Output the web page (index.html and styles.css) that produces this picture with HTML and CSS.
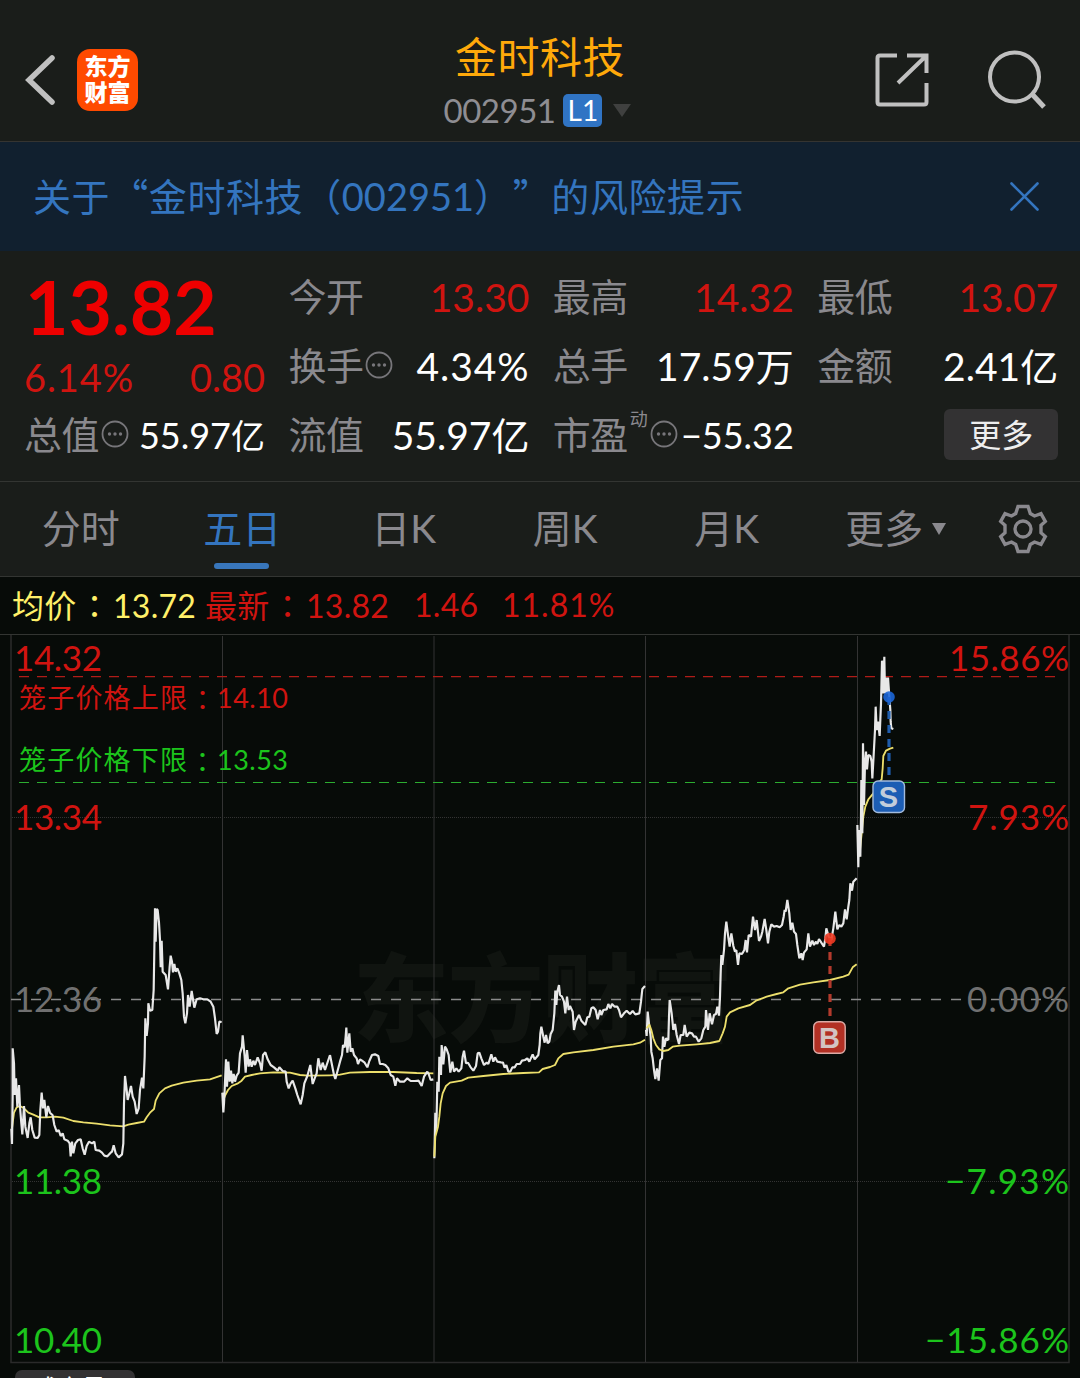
FILE: index.html
```html
<!DOCTYPE html>
<html lang="zh-CN">
<head>
  <meta charset="UTF-8">
  <meta name="viewport" content="width=device-width, initial-scale=1.0">
  <title>金时科技 002951</title>
  <link rel="stylesheet" href="styles.css">
</head>
<body>

  <header class="header">
    <div class="header-left">
      <svg class="back" width="32" height="56" viewBox="0 0 32 56"><path d="M28 6L5 28L28 50"/></svg>
      <div class="logo"><span>东方</span><span>财富</span></div>
    </div>
    <div class="header-title">
      <h1>金时科技</h1>
      <div class="code">
        <span class="code-num">002951</span>
        <span class="level">L1</span>
        <svg width="20" height="13" viewBox="0 0 20 13"><path d="M1 0H19L10 13Z" fill="#3f403f"/></svg>
      </div>
    </div>
    <div class="header-right">
      <svg class="line-icon" width="54" height="54" viewBox="0 0 54 54">
        <path d="M22 2.5H5Q2.5 2.5 2.5 5V49Q2.5 51.5 5 51.5H49Q51.5 51.5 51.5 49V30"/>
        <path d="M32 2.5H51.5V20M51 3L23 30"/>
      </svg>
      <svg class="line-icon" width="60" height="60" viewBox="0 0 60 60">
        <circle cx="27.5" cy="27" r="24.5"/>
        <path d="M44.5 43.5L57 57" stroke-width="5"/>
      </svg>
    </div>
  </header>

  <div class="notice">
    <p>关于“金时科技（<span class="notice-num">002951</span>）<span class="quote-end">”</span>的风险提示</p>
    <svg width="29" height="29" viewBox="0 0 29 29"><path d="M1.5 1.5L27.5 27.5M27.5 1.5L1.5 27.5"/></svg>
  </div>

  <section class="quote">
    <div class="price-box">
      <div class="price">13.82</div>
      <div class="change"><span class="rate">6.14%</span><span>0.80</span></div>
    </div>
    <div class="cell"><label>今开</label><b class="up">13.30</b></div>
    <div class="cell"><label>最高</label><b class="up">14.32</b></div>
    <div class="cell"><label>最低</label><b class="up">13.07</b></div>
    <div class="cell"><label>换手</label><svg class="more-dot" width="28" height="28" viewBox="0 0 28 28"><circle class="ring" cx="14" cy="14" r="12.5"/><circle cx="8.5" cy="14" r="1.7"/><circle cx="14" cy="14" r="1.7"/><circle cx="19.5" cy="14" r="1.7"/></svg><b class="rate">4.34%</b></div>
    <div class="cell"><label>总手</label><b>17.59<i>万</i></b></div>
    <div class="cell"><label>金额</label><b>2.41<i>亿</i></b></div>
    <div class="cell small"><label>总值</label><svg class="more-dot" width="28" height="28" viewBox="0 0 28 28"><circle class="ring" cx="14" cy="14" r="12.5"/><circle cx="8.5" cy="14" r="1.7"/><circle cx="14" cy="14" r="1.7"/><circle cx="19.5" cy="14" r="1.7"/></svg><b>55.97<i>亿</i></b></div>
    <div class="cell"><label>流值</label><b>55.97<i>亿</i></b></div>
    <div class="cell small"><label>市盈</label><sup>动</sup><svg class="more-dot" width="28" height="28" viewBox="0 0 28 28"><circle class="ring" cx="14" cy="14" r="12.5"/><circle cx="8.5" cy="14" r="1.7"/><circle cx="14" cy="14" r="1.7"/><circle cx="19.5" cy="14" r="1.7"/></svg><b>−55.32</b></div>
    <div class="cell end"><button class="more-btn">更多</button></div>
  </section>

  <nav class="tabs">
    <a>分时</a>
    <a class="active">五日</a>
    <a>日K</a>
    <a>周K</a>
    <a>月K</a>
    <a class="tab-more">更多<svg width="14" height="12" viewBox="0 0 14 12"><path d="M0 0H14L7 12Z"/></svg></a>
    <svg class="gear" width="50" height="50" viewBox="998 504 50 50">
      <path d="M1018 506.5H1028L1030.3 513.5L1034.5 516L1041 513.7L1045.3 521.5L1041 525.3V532.7L1045.3 536.5L1041 544.3L1034.5 542L1030.3 544.5L1028 551.5H1018L1015.7 544.5L1011.5 542L1005 544.3L1000.7 536.5L1005 532.7V525.3L1000.7 521.5L1005 513.7L1011.5 516L1015.7 513.5Z"/>
      <circle cx="1023" cy="529" r="8"/>
    </svg>
  </nav>

  <div class="info">
    <span class="avg">均价<em lang="zh-TW">：</em>13.72</span>
    <span class="last">最新<em lang="zh-TW">：</em>13.82</span>
    <span class="last diff">1.46</span>
    <span class="last pct">11.81%</span>
  </div>

  <svg class="chart" width="1080" height="734" viewBox="0 635 1080 734">
    <text class="watermark" x="353" y="1034" textLength="380">东方财富</text>

    <!-- grid -->
    <path class="frame" d="M11 635V1362.5H1069V635"/>
    <path class="grid" d="M222.5 636V1362M434 636V1362M645.5 636V1362M857.5 636V1362"/>
    <path class="dots" d="M12 817.5H1069M12 1181.5H1069"/>
    <path class="zero" d="M11 999.5H1069"/>
    <path class="limit-up" d="M19 676.7H1055"/>
    <path class="limit-down" d="M19 782.5H1055"/>

    <!-- day 1, start of day 2 -->
    <g transform="translate(0 890) scale(.33333)">
      <polyline class="avg-line" points="36,715 42,668 50,652 60,648 72,655 85,668 100,674 118,682 140,682 165,680 190,683 220,693 250,697 290,701 330,706 370,709 385,704 410,699 432,695 440,682 450,668 462,657 467,632 478,610 495,595 515,587 550,578 590,572 630,568 665,556"/>
      <polyline class="price-line" points="34,716 36,762 38,620 38,475 42,520 44,615 48,565 52,650 57,585 60,650 64,700 67,733 72,648 76,710 83,744 88,700 92,682 97,720 104,743 113,744 118,735 121,660 125,608 129,655 133,630 139,682 144,648 150,668 158,676 163,705 170,725 176,720 182,738 188,730 193,748 203,752 209,760 212,799 216,755 220,790 226,760 234,750 242,748 248,775 254,794 260,768 267,755 276,760 283,755 287,780 298,782 306,788 313,797 322,799 332,788 336,785 341,766 347,790 356,802 366,793 370,760 372,640 375,558 380,600 383,630 388,610 393,588 398,620 404,635 410,672 416,655 420,600 426,563 430,595 434,500 436,385 440,438 444,400 445,340 450,362 457,360 461,300 463,180 465,55 467,155 470,57 473,60 477,98 480,150 482,232 485,152 488,245 497,255 504,298 509,230 512,197 516,215 519,247 523,222 527,245 532,235 538,250 544,270 548,310 552,380 556,400 561,370 564,315 569,350 575,303 583,353 590,328 600,325 610,328 622,328 632,335 640,350 645,385 650,432 654,425 658,395 665,396"/>
      <polyline class="avg-line" points="670,630 676,615 684,600 695,588 712,581 725,572 735,560 755,555 780,550 820,547 870,548 900,555 925,557 990,556"/>
      <polyline class="price-line" points="667,608 670,667 672,640 674,600 678,508 681,590 685,515 689,575 693,542 697,580 701,552 705,575 710,557 716,548 720,490 726,470 728,436 734,500 737,548 741,480 746,530 750,508 755,530 760,512 765,525 773,502 780,520 785,542 789,495 796,487 803,508 812,525 822,532 833,542 838,532 848,543 857,545 860,575 866,595 872,580 878,572 886,595 892,615 902,643 908,615 913,580 922,558 931,525 938,582 944,565 950,550 955,505 962,540 968,518 975,540 981,522 990,495"/>
    </g>

    <!-- rest of day 2, day 3 -->
    <g transform="translate(320 930) scale(.33333)">
      <polyline class="avg-line" points="30,436 60,434 90,428 150,426 220,426 290,429 340,430"/>
      <polyline class="price-line" points="30,375 36,405 42,435 46,447 52,425 60,395 66,375 69,345 74,352 77,320 79,293 82,368 88,310 92,365 97,355 102,375 110,385 114,402 120,388 126,392 134,398 142,412 148,393 156,375 165,373 175,378 180,402 188,402 196,405 205,415 212,435 220,440 226,467 231,445 240,455 252,455 262,445 272,453 285,453 296,452 305,468 312,440 322,425 326,432 332,450 340,448"/>
      <polyline class="price-line" points="343,685 345,600 346,548 349,600 352,455 356,485 358,380 361,405 363,435 365,345 370,403 375,350 380,358 386,375 391,428 397,395 402,425 409,415 416,425 424,415 428,380 432,362 438,400 444,398 452,412 460,422 468,408 473,370 478,368 484,385 492,405 500,398 505,402 514,373 520,395 525,382 532,395 543,397 549,398 554,413 559,405 565,425 571,425 577,412 584,412 590,402 600,402 606,392 615,390 622,385 628,395 638,373 644,388 655,375 659,345 661,310 664,290 670,320 674,338 678,315 683,340 688,335 692,312 698,300 703,250 706,182 709,225 712,185 717,165 720,195 726,200 732,215 736,250 741,200 746,240 750,228 758,245 762,300 767,275 777,255 784,272 796,285 802,262 808,260 814,235 820,232 827,240 833,268 840,240 844,255 850,240 860,238 865,222 871,235 876,222 884,230 892,230 897,240 903,262 912,250 920,242 930,252 938,243 946,253 958,250 963,215 967,177 975,168"/>
      <polyline class="avg-line" points="343,680 346,620 354,590 358,560 362,520 368,490 378,468 390,458 425,452 445,443 490,438 550,432 610,429 657,427 668,417 690,411 705,405 715,385 730,372 760,367 820,360 880,350 940,343 960,338 975,329"/>
    </g>

    <!-- day 4 -->
    <g transform="translate(630 870) scale(.33333)">
      <polyline class="price-line" points="48,480 50,498 53,425 58,470 62,500 64,545 68,565 72,600 76,627 81,595 86,632 91,570 96,565 99,500 103,530 108,505 115,510 117,440 119,390 125,430 130,480 135,462 140,495 147,522 152,495 160,495 164,465 170,500 178,488 186,490 192,500 198,500 206,515 214,505 220,480 226,470 228,420 234,480 239,430 246,463 252,435 258,432 262,410 267,437 270,380 272,310 274,255 277,285 282,240 285,190 289,155 294,195 299,230 304,190 310,228 315,245 319,240 324,285 328,250 336,252 343,240 347,210 351,247 356,195 363,200 369,140 375,180 380,150 387,213 393,200 397,185 404,147 409,180 414,220 418,185 424,163 432,170 440,168 449,172 456,165 461,140 464,120 467,125 472,90 478,130 482,180 487,158 492,185 498,192 502,225 508,265 514,250 518,270 522,248 530,238 535,190 540,230 547,212 552,225 558,215 562,222 567,207 574,218 582,230 586,205 589,175 596,200 604,210 610,175 616,125 622,178 628,165 634,170 640,160 645,118 650,148 655,110 658,90 661,40 666,62 670,35 680,25"/>
      <polyline class="avg-line" points="50,475 58,464 64,480 70,505 78,525 88,538 100,543 115,540 128,530 150,527 200,523 240,519 268,513 278,490 285,470 290,440 300,427 325,415 360,405 378,392 410,380 440,372 460,367 475,355 510,344 550,337 600,330 640,320 656,314 668,292 680,283"/>
    </g>

    <!-- day 5 -->
    <g transform="translate(780 630) scale(.33333)">
      <polyline class="avg-line" points="238,680 244,620 250,560 256,530 265,508 280,490 290,465 305,448 308,415 310,378 318,362 330,356 340,353"/>
      <polyline class="price-line" points="232,585 235,712 237,600 241,680 243,560 244,450 247,610 249,340 252,525 255,400 258,365 261,418 265,375 271,378 275,395 277,445 281,375 285,300 287,230 290,300 294,275 299,318 303,220 306,92 310,190 313,80 315,190 318,143 321,190 324,143 328,200 331,240 332,275 334,295 340,297"/>
    </g>

    <!-- axis labels -->
    <g class="axis">
      <text class="red" x="14" y="671" textLength="88">14.32</text>
      <text class="red" x="14" y="830" textLength="88">13.34</text>
      <text class="gray" x="14" y="1012" textLength="88">12.36</text>
      <text class="green" x="14" y="1194" textLength="88">11.38</text>
      <text class="green" x="14" y="1353" textLength="88">10.40</text>
      <text class="red" x="949" y="671" textLength="120">15.86%</text>
      <text class="red" x="968" y="830" textLength="101">7.93%</text>
      <text class="gray" x="967" y="1012" textLength="102">0.00%</text>
      <text class="green" x="945" y="1194" textLength="124">−7.93%</text>
      <text class="green" x="925" y="1353" textLength="144">−15.86%</text>
    </g>
    <g class="cage">
      <text class="red" x="19" y="708" textLength="168">笼子价格上限</text>
      <text class="red colon" x="189" y="710">：</text>
      <text class="red" x="217" y="708" textLength="71">14.10</text>
      <text class="green" x="19" y="770" textLength="168">笼子价格下限</text>
      <text class="green colon" x="189" y="772">：</text>
      <text class="green" x="217" y="770" textLength="71">13.53</text>
    </g>

    <!-- trade marks -->
    <path class="mark-s" d="M889 697V776"/>
    <circle cx="889" cy="697" r="5.8" fill="#1c66d8" fill-opacity=".9"/>
    <rect x="873" y="781" width="31.5" height="31.5" rx="5" fill="#1c5db4" stroke="#a3bbdc" stroke-width="1.4"/>
    <text class="mark" x="888.5" y="807" fill="#c2cddb">S</text>
    <path class="mark-b" d="M830 938V1017"/>
    <circle cx="830" cy="938.5" r="5.8" fill="#f03a22" fill-opacity=".9"/>
    <rect x="813.7" y="1021.7" width="31.5" height="31.5" rx="5" fill="#b23024" stroke="#dcaaa5" stroke-width="1.4"/>
    <text class="mark" x="829.5" y="1048" fill="#d3c4c2">B</text>
  </svg>

  <div class="indicator"><span>成交量</span></div>

</body>
</html>
```
FILE: styles.css
```css
* {
  box-sizing: border-box;
}

body {
  margin: 0;
  width: 1080px;
  height: 1378px;
  overflow: hidden;
  background-color: #070b08;
  color: #fff;
  font-family: Lato, "Noto Sans CJK SC", sans-serif;
  text-spacing-trim: space-all;
  display: flex;
  flex-direction: column;
}

h1, p {
  margin: 0;
  font-weight: 400;
}

svg {
  flex: none;
}

/* header */
.header {
  height: 142px;
  flex: none;
  display: grid;
  grid-template-columns: 1fr auto 1fr;
  background-color: #1a1d1a;
  border-bottom: 1px solid #353431;
}

.header-left {
  display: flex;
  align-items: center;
  gap: 21px;
  padding: 19px 0 0 24px;
}

.back path {
  fill: none;
  stroke: #c0c0c0;
  stroke-width: 5.5;
  stroke-linecap: round;
}

.logo {
  width: 61px;
  height: 62px;
  padding-bottom: 3px;
  border-radius: 13px;
  background-color: #ff4a00;
  display: flex;
  flex-direction: column;
  align-items: center;
  justify-content: center;
  font-size: 23px;
  font-weight: 900;
  line-height: 26px;
}

.header-title {
  display: flex;
  flex-direction: column;
  align-items: center;
  padding-top: 32px;
}

.header-title h1 {
  font-size: 42px;
  line-height: 50px;
  letter-spacing: 0.5px;
  color: #ffa90a;
}

.code {
  display: flex;
  align-items: center;
  margin-top: 11px;
  height: 34px;
  font-size: 33px;
  color: #8e8d92;
  position: relative;
  left: -2px;
}

.code-num {
  letter-spacing: -0.5px;
}

.level {
  width: 39px;
  height: 33px;
  margin: 0 10px 0 8px;
  border-radius: 5px;
  background-color: #3074c4;
  color: #fff;
  font-size: 28px;
  line-height: 33px;
  text-align: center;
}

.header-right {
  display: flex;
  align-items: center;
  justify-content: flex-end;
  gap: 58px;
  padding: 18px 33px 0 0;
}

.line-icon {
  fill: none;
  stroke: #c0c0c0;
  stroke-width: 4;
}

/* notice */
.notice {
  height: 109px;
  flex: none;
  display: flex;
  align-items: center;
  justify-content: space-between;
  padding: 0 41px 0 33px;
  background-color: #11202f;
  color: #3475bf;
}

.notice p {
  padding-bottom: 4px;
  font-family: "Noto Sans CJK SC", sans-serif;
  font-size: 38px;
  letter-spacing: 0.6px;
  white-space: nowrap;
}

.notice-num {
  font-family: Lato, sans-serif;
  letter-spacing: 0;
}

.quote-end {
  display: inline-block;
}

.notice svg path {
  stroke: #3475bf;
  stroke-width: 2.6;
  stroke-linecap: round;
}

/* quote */
.quote {
  height: 231px;
  flex: none;
  display: grid;
  grid-template-columns: repeat(4, 241px);
  grid-template-rows: 70px 69px 69px;
  column-gap: 23.4px;
  padding: 11px 0 0 24px;
  background-color: #1a1d1a;
  border-bottom: 1px solid #333532;
}

.price-box {
  grid-row: span 2;
}

.price {
  height: 91px;
  padding-left: 1px;
  font-size: 75px;
  line-height: 89px;
  font-weight: 700;
  color: #ee0000;
}

.change {
  display: flex;
  justify-content: space-between;
  height: 48px;
  line-height: 48px;
  font-size: 38px;
  color: #d01410;
}

.rate {
  letter-spacing: 0.9px;
}

.cell {
  display: flex;
  align-items: center;
  font-size: 39px;
  line-height: 69px;
}

.cell label {
  padding-bottom: 2px;
  font-size: 38px;
  letter-spacing: -0.5px;
  color: #8a898e;
}

.cell b {
  margin-left: auto;
  font-weight: 400;
}

.cell i {
  font-style: normal;
  font-size: 38px;
}

.cell.small b {
  font-size: 36px;
}

.cell.small i {
  font-size: 34px;
}

.cell .up {
  color: #d01410;
}

.cell sup {
  font-size: 18px;
  line-height: 18px;
  margin: 0 0 34px 2px;
  color: #8a898e;
}

.more-dot {
  margin: 0 0 4px 2px;
  fill: #77767a;
}

.more-dot .ring {
  fill: none;
  stroke: #77767a;
  stroke-width: 1.8;
}

.end {
  justify-content: flex-end;
}

.more-btn {
  width: 114px;
  height: 51px;
  margin-bottom: 2px;
  padding: 0;
  border: none;
  border-radius: 6px;
  background-color: #333233;
  color: #eee;
  font-family: inherit;
  font-size: 32px;
  line-height: 46px;
}

/* tabs */
.tabs {
  height: 95px;
  flex: none;
  display: flex;
  align-items: center;
  background-color: #1a1d1a;
  border-bottom: 1px solid #333532;
  color: #8a898e;
}

.tabs a {
  width: 161.5px;
  height: 94px;
  line-height: 92px;
  font-size: 39px;
  text-align: center;
}

.tabs .active {
  position: relative;
  color: #3475bf;
}

.tabs .active::after {
  content: "";
  position: absolute;
  left: 52px;
  top: 81px;
  width: 55px;
  height: 6px;
  border-radius: 3px;
  background-color: #3876bb;
}

.tabs .tab-more {
  width: 176.5px;
}

.tab-more svg {
  margin-left: 9px;
  vertical-align: 8px;
  fill: #8a898e;
}

.gear {
  margin-left: 14px;
  fill: none;
  stroke: #8a898e;
  stroke-width: 3.4;
}

/* info line above chart */
.info {
  height: 58px;
  flex: none;
  display: flex;
  padding-left: 12px;
  line-height: 55px;
  font-size: 32px;
  border-bottom: 1px solid #333532;
}

.info em {
  font-style: normal;
  font-family: "Noto Sans CJK TC", sans-serif;
  margin: 0 2px;
}

.avg {
  width: 193px;
  letter-spacing: 0.3px;
  color: #fff069;
}

.last {
  width: 209px;
  letter-spacing: 0.3px;
  color: #d01410;
}

.info .diff {
  width: 88px;
}

.info .pct {
  letter-spacing: 1px;
}

/* chart */
.chart {
  display: block;
}

.frame {
  fill: none;
  stroke: #2a2a2a;
  stroke-width: 1.6;
}

.grid {
  stroke: #333;
  stroke-width: 1;
}

.dots {
  stroke: #333;
  stroke-dasharray: 1 1;
}

.zero {
  stroke: #8a8a8a;
  stroke-width: 1.6;
  stroke-dasharray: 10 10;
}

.limit-up {
  stroke: #b01c18;
  stroke-width: 1.3;
  stroke-dasharray: 10 8;
}

.limit-down {
  stroke: #2cac30;
  stroke-width: 1.1;
  stroke-dasharray: 10 8;
}

.price-line {
  fill: none;
  stroke: #e8e8e8;
  stroke-width: 6.5;
  stroke-linejoin: bevel;
}

.avg-line {
  fill: none;
  stroke: #ecdf6c;
  stroke-width: 5.5;
  stroke-linejoin: round;
}

.axis {
  font-size: 35px;
}

.cage {
  font-size: 27px;
}

.colon {
  font-family: "Noto Sans CJK TC", sans-serif;
}

.red {
  fill: #d01410;
}

.green {
  fill: #1cc41c;
}

.gray {
  fill: #707070;
}

.watermark {
  font-size: 96px;
  font-weight: 900;
  fill: #101410;
}

.mark {
  font-family: "Liberation Sans", sans-serif;
  font-size: 29px;
  font-weight: 700;
  text-anchor: middle;
}

.mark-s,
.mark-b {
  stroke: #1f5cab;
  stroke-width: 3.2;
  stroke-dasharray: 8 6;
}

.mark-b {
  stroke: #b23a2c;
}

/* indicator button, cut off by the bottom edge */
.indicator {
  width: 120px;
  height: 40px;
  flex: none;
  margin: 1px 0 0 15px;
  padding-left: 19px;
  border-radius: 7px;
  background-color: #333233;
  font-size: 24px;
  line-height: 35px;
}
```
